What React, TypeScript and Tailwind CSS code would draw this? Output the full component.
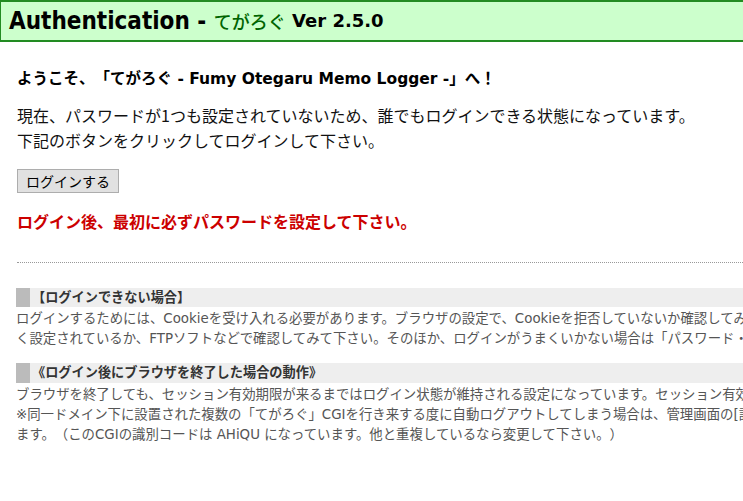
import React from "react";

const jp = '"Noto Sans CJK JP", sans-serif';
const ver = '"DejaVu Sans", "Noto Sans CJK JP", sans-serif';
const cond = '"DejaVu Sans Condensed", "DejaVu Sans", sans-serif';

export default function App() {
  return (
    <div className="w-[743px] h-[501px] overflow-hidden bg-white [text-spacing-trim:space-all]" style={{ fontFamily: jp }}>
      <div className="h-[42px] bg-[#ccffcc] border-t-2 border-b-2 border-l border-[#228b22] flex items-center pl-[8px] whitespace-pre">
        <span className="text-[24px] font-bold text-black leading-none [font-stretch:condensed]" style={{ fontFamily: cond }}>Authentication - </span>
        <span className="text-[18px] font-medium text-[#006400] leading-none" style={{ fontFamily: jp }}>てがろぐ</span>
        <span className="text-[18px] font-bold text-black leading-none" style={{ fontFamily: ver }}> Ver 2.5.0</span>
      </div>
      <div className="px-[17px] pt-[23px]">
        <p className="text-[15.5px] font-bold text-black leading-[24px] whitespace-nowrap" style={{ fontFamily: ver }}>
          <span style={{ fontFamily: jp }}>ようこそ、「てがろぐ</span> - Fumy Otegaru Memo Logger -<span style={{ fontFamily: jp }}>」へ！</span>
        </p>
        <p className="mt-[12px] text-[16px] text-[#111] leading-[25px] whitespace-nowrap">
          現在、パスワードが1つも設定されていないため、誰でもログインできる状態になっています。<br />
          下記のボタンをクリックしてログインして下さい。
        </p>
        <button className="mt-[16px] h-[24px] px-[8px] bg-[#e1e1e1] border border-[#adadad] text-[14px] text-black leading-none">ログインする</button>
        <p className="mt-[16px] text-[16px] font-bold text-[#cc0000] leading-[24px] whitespace-nowrap">ログイン後、最初に必ずパスワードを設定して下さい。</p>
      </div>
      <div className="ml-[17px] mt-[29px] border-t border-dotted border-[#999]" />
      <div className="pl-[16px] mt-[25px] text-[13.4px] whitespace-nowrap" style={{ fontFamily: ver }}>
        <div className="h-[19px] bg-[#eeeeee] flex items-center border-l-[14px] border-[#bbbbbb] pl-[2px] font-bold text-[#333] text-[13.2px]">【ログインできない場合】</div>
        <p className="text-[#555] leading-[20px] mt-[2px]">
          ログインするためには、Cookieを受け入れる必要があります。ブラウザの設定で、Cookieを拒否していないか確認してみて下さい。また、パスワードが正し<br />
          く設定されているか、FTPソフトなどで確認してみて下さい。そのほか、ログインがうまくいかない場合は「パスワード・セッション設定」をご確認下さい。
        </p>
        <div className="h-[20px] mt-[14px] bg-[#eeeeee] flex items-center border-l-[14px] border-[#bbbbbb] pl-[2px] font-bold text-[#333] text-[13.2px]">《ログイン後にブラウザを終了した場合の動作》</div>
        <p className="text-[#555] leading-[20px] mt-[2px]">
          ブラウザを終了しても、セッション有効期限が来るまではログイン状態が維持される設定になっています。セッション有効期限は設定で変更できます。<br />
          ※同一ドメイン下に設置された複数の「てがろぐ」CGIを行き来する度に自動ログアウトしてしまう場合は、管理画面の[設定]で識別コードを変更してみて下さい<br />
          ます。（このCGIの識別コードは AHiQU になっています。他と重複しているなら変更して下さい。）
        </p>
      </div>
    </div>
  );
}
